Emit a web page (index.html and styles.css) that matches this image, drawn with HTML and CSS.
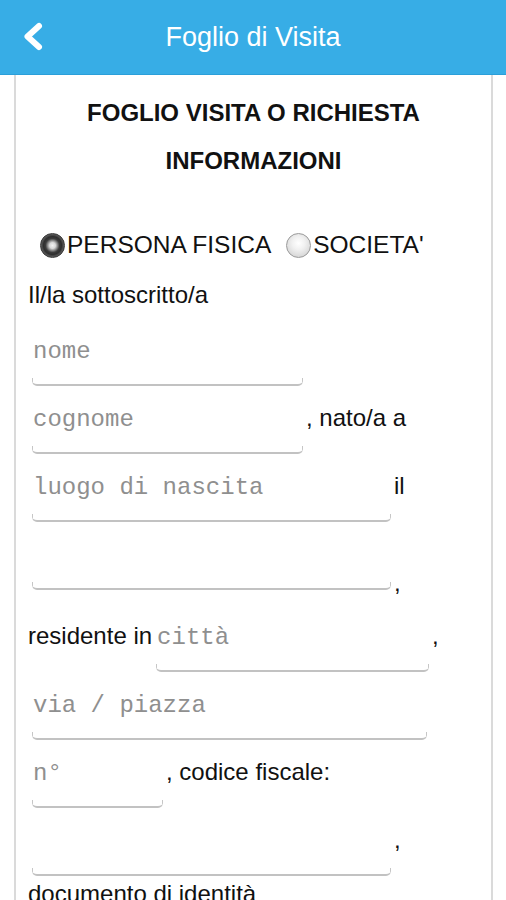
FILE: index.html
```html
<!DOCTYPE html>
<html lang="it">
<head>
<meta charset="utf-8">
<title>Foglio di Visita</title>
<link rel="stylesheet" href="styles.css">
</head>
<body>
<header class="topbar">
  <a class="back" aria-label="Indietro"><svg width="60" height="74" viewBox="0 0 60 74"><polyline points="39,26 27.5,36.5 39,47" fill="none" stroke="#fff" stroke-width="6" stroke-linecap="round" stroke-linejoin="round"/></svg></a>
  <h1 class="topbar-title">Foglio di Visita</h1>
  <span class="spacer"></span>
</header>
<main class="card">
  <h2 class="form-title">FOGLIO VISITA O RICHIESTA<br>INFORMAZIONI</h2>
  <div class="choice">
    <label class="opt"><input type="radio" name="tipo" checked><span>PERSONA FISICA</span></label>
    <label class="opt second"><input type="radio" name="tipo"><span>SOCIETA'</span></label>
  </div>
  <p class="intro">Il/la sottoscritto/a</p>
  <div class="row first"><input class="field w270" placeholder="nome"></div>
  <div class="row"><input class="field w270" placeholder="cognome">, nato/a a</div>
  <div class="row"><input class="field w358" placeholder="luogo di nascita">il</div>
  <div class="row"><input class="field w358"><span class="low">,</span></div>
  <div class="row spaced">residente in<input class="field w272" placeholder="città">,</div>
  <div class="row"><input class="field w394" placeholder="via / piazza"></div>
  <div class="row"><input class="field w130" placeholder="n°">, codice fiscale:</div>
  <div class="row"><input class="field w358">,</div>
  <p class="intro tail">documento di identità</p>
</main>
</body>
</html>
```
FILE: styles.css
```css
html, body {
  margin: 0;
  padding: 0;
  background: #fff;
}
body {
  font-family: "Liberation Sans", Arial, sans-serif;
  color: #111;
  width: 506px;
}
.topbar {
  display: grid;
  grid-template-columns: 60px 1fr 60px;
  align-items: center;
  height: 74px;
  background: #37ade6;
  border-bottom: 1px solid #2b9fd9;
}
.back {
  display: block;
  height: 74px;
}
.back svg {
  display: block;
}
.topbar-title {
  margin: 0;
  text-align: center;
  color: #fff;
  font-weight: normal;
  font-size: 27px;
  line-height: 30px;
}
.card {
  margin: 0 13px 0 14px;
  border-left: 2px solid #dadada;
  border-right: 2px solid #dadada;
  padding: 14px 12px 40px 12px;
}
.form-title {
  margin: 0;
  text-align: center;
  font-size: 24px;
  font-weight: bold;
  line-height: 48px;
}
.choice {
  display: flex;
  align-items: center;
  height: 30px;
  margin-top: 45px;
  padding-left: 12px;
  font-size: 24.5px;
}
.opt {
  display: flex;
  align-items: center;
  gap: 2px;
}
.opt.second {
  margin-left: 15px;
}
.opt input {
  -webkit-appearance: none;
  appearance: none;
  margin: 0;
  width: 25px;
  height: 25px;
  border-radius: 50%;
  border: 1px solid #9a9a9a;
  background: radial-gradient(circle at 50% 40%, #ffffff 0, #f1f1f1 35%, #c9c9c9 100%);
}
.opt input:checked {
  border-color: #333;
  background: radial-gradient(circle at 50% 50%, #f4f4f4 0, #d8d8d8 3px, #8a8a8a 5px, #3c3c3c 7px, #2e2e2e 9px, #6a6a6a 12px);
}
.intro {
  margin: 21px 0 0;
  font-size: 24px;
  line-height: 28px;
}
.intro.tail {
  margin-top: 4px;
}
.row {
  font-size: 24px;
  margin-top: 12px;
  white-space: nowrap;
}
.row.first {
  margin-top: 21px;
}
.row.spaced {
  margin-top: 26px;
}
.field {
  box-sizing: border-box;
  height: 56px;
  margin: 0 3px 0 4px;
  padding: 0 2px 12px 1px;
  border: none;
  border-bottom: 2px solid #c2c2c2;
  border-radius: 0 0 5px 5px;
  outline: none;
  font-family: "Liberation Mono", "Courier New", monospace;
  font-size: 24px;
  color: #333;
  vertical-align: baseline;
  background:
    linear-gradient(#c6c6c6, #c6c6c6) left 0 bottom 2px / 1px 4px no-repeat,
    linear-gradient(#c6c6c6, #c6c6c6) right 0 bottom 2px / 1px 4px no-repeat,
    #fff;
}
.field::placeholder {
  color: #8f8f8f;
  opacity: 1;
}
.w270 { width: 271px; }
.w358 { width: 359px; }
.w272 { width: 273px; }
.w394 { width: 395px; }
.w130 { width: 131px; }
.low {
  vertical-align: -29px;
  line-height: 0;
}
```
